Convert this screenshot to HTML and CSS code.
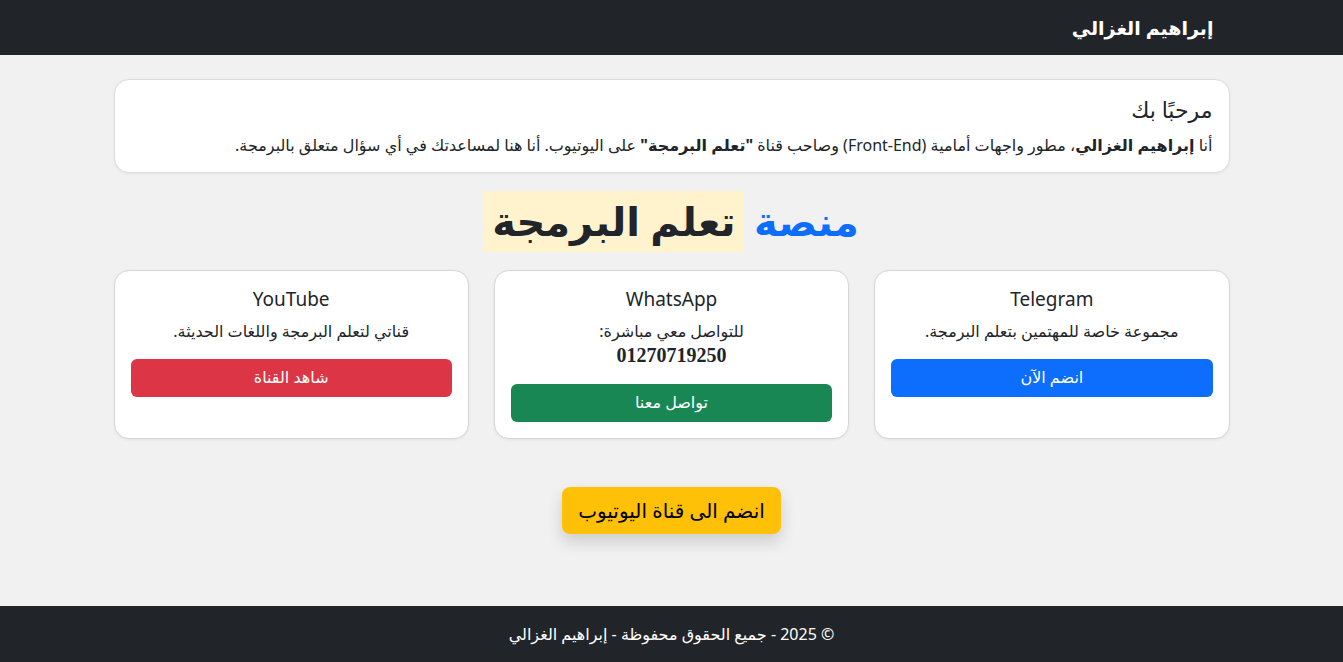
FILE: index.html
```html
<!DOCTYPE html>
<html lang="ar" dir="rtl">
<head>
<meta charset="utf-8">
<title>إبراهيم الغزالي</title>
<link rel="stylesheet" href="styles.css">
</head>
<body>
<nav class="navbar">
  <div class="container navbar-inner">
    <a class="brand" href="#">إبراهيم الغزالي</a>
  </div>
</nav>

<main class="container main">
  <section class="welcome">
    <h4 class="welcome-title">مرحبًا بك</h4>
    <p class="welcome-text">أنا <strong>إبراهيم الغزالي</strong>، مطور واجهات أمامية (Front-End) وصاحب قناة <strong>"تعلم البرمجة"</strong> على اليوتيوب. أنا هنا لمساعدتك في أي سؤال متعلق بالبرمجة.</p>
  </section>

  <h1 class="title"><span class="blue">منصة</span> <mark class="mark">تعلم البرمجة</mark></h1>

  <div class="cards">
    <div class="card">
      <h5 class="card-title">Telegram</h5>
      <p class="card-text">مجموعة خاصة للمهتمين بتعلم البرمجة.</p>
      <a class="btn btn-primary" href="#">انضم الآن</a>
    </div>
    <div class="card">
      <h5 class="card-title">WhatsApp</h5>
      <p class="card-text">للتواصل معي مباشرة:<br><strong class="phone">01270719250</strong></p>
      <a class="btn btn-success" href="#">تواصل معنا</a>
    </div>
    <div class="card">
      <h5 class="card-title">YouTube</h5>
      <p class="card-text">قناتي لتعلم البرمجة واللغات الحديثة.</p>
      <a class="btn btn-danger" href="#">شاهد القناة</a>
    </div>
  </div>

  <div class="cta-wrap">
    <a class="btn-cta" href="#">انضم الى قناة اليوتيوب</a>
  </div>
</main>

<footer class="footer">
  <p>© 2025 - جميع الحقوق محفوظة - إبراهيم الغزالي</p>
</footer>
</body>
</html>
```

FILE: styles.css
```css
* { box-sizing: border-box; }
html, body { margin: 0; padding: 0; }
body {
  font-family: "Noto Sans", "DejaVu Sans", sans-serif;
  font-size: 16px;
  line-height: 1.5;
  color: #212529;
  background: #f1f1f1;
  min-height: 662px;
  display: flex;
  flex-direction: column;
}
a { text-decoration: none; }

.container {
  width: 1140px;
  margin: 0 auto;
  padding: 0 12px;
}

.navbar {
  background: #212529;
  height: 55px;
  display: flex;
  align-items: center;
}
.navbar-inner {
  display: flex;
  justify-content: flex-start;
  padding-right: 28px;
}
.brand {
  color: #fff;
  font-size: 19px;
  font-weight: bold;
  line-height: 30px;
}

.main { flex: 1; padding-top: 24px; }

.welcome {
  background: #fff;
  border: 1px solid #dcdcdc;
  border-radius: 15px;
  padding: 16px 16px 15px 20px;
  box-shadow: 0 1px 3px rgba(0,0,0,.06);
}
.welcome-title {
  margin: 0 0 10px;
  font-size: 22px;
  font-weight: 400;
  line-height: 27px;
}
.welcome-text { margin: 0; font-size: 16px; }
.welcome-text strong { font-weight: bold; }

.title {
  text-align: center;
  font-size: 40px;
  font-weight: bold;
  line-height: 48px;
  margin: 24px 0 25px;
}
.blue { color: #0d6efd; }
.mark {
  background: #fff3cd;
  color: #212529;
  padding: 2px 8px 4px;
}

.cards {
  display: grid;
  grid-template-columns: repeat(3, 1fr);
  gap: 25px;
}
.card {
  background: #fff;
  border: 1px solid #d6d6d6;
  border-radius: 15px;
  padding: 16px 16px 16px;
  text-align: center;
  display: flex;
  flex-direction: column;
  box-shadow: 0 1px 3px rgba(0,0,0,.06);
}
.card-title {
  margin: 0 0 8px;
  font-size: 19px;
  font-weight: 400;
  line-height: 24px;
}
.card-text { margin: 0 0 16px; font-size: 16px; line-height: 24px; }
.phone {
  font-family: "Liberation Serif", serif;
  font-weight: bold;
  font-size: 20px;
}
.btn {
  display: block;
  height: 38px;
  line-height: 36px;
  border-radius: 6px;
  color: #fff;
  font-size: 16px;
}
.btn-primary { background: #0d6efd; }
.btn-success { background: #198754; }
.btn-danger { background: #dc3545; }

.cta-wrap {
  display: flex;
  justify-content: center;
  margin: 48px 0 72px;
}
.btn-cta {
  display: inline-block;
  background: #ffc107;
  color: #000;
  font-size: 20px;
  line-height: 31px;
  padding: 8px 16px;
  border-radius: 8px;
  box-shadow: 0 8px 16px rgba(0,0,0,.15);
}

.footer {
  background: #212529;
  color: #fff;
  text-align: center;
  height: 56px;
  padding: 16px 0;
}
.footer p { margin: 0; line-height: 24px; font-size: 16px; }
```
